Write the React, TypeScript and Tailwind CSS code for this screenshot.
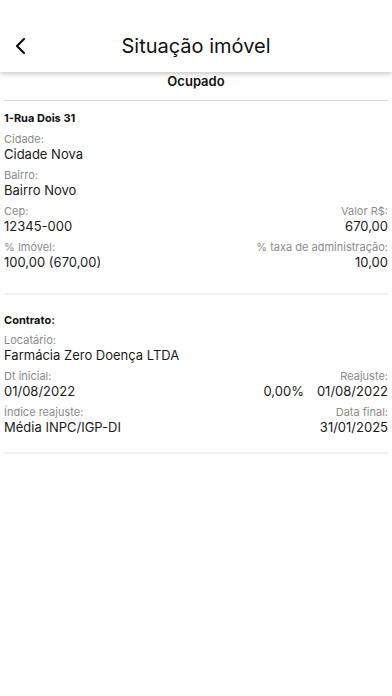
import React from "react";

const Label = ({ children, right }: { children: React.ReactNode; right?: boolean }) => (
  <div className={`text-[11px] leading-[14px] text-[#8a8a8a] ${right ? "text-right" : ""}`}>{children}</div>
);
const Value = ({ children, right }: { children: React.ReactNode; right?: boolean }) => (
  <div className={`text-[13px] leading-[16px] text-[#1a1a1a] ${right ? "text-right" : ""}`}>{children}</div>
);

export default function App() {
  return (
    <div
      className="w-[392px] h-[696px] bg-white overflow-hidden"
      style={{ fontFamily: "Inter, 'Noto Sans', sans-serif" }}
    >
      <div className="relative h-[72px] bg-white shadow-[0_2px_5px_rgba(0,0,0,0.22)] z-10 flex items-end justify-center pb-[14px]">
        <svg
          className="absolute left-[13px] top-[37px]"
          width="16"
          height="18"
          viewBox="0 0 16 18"
          fill="none"
        >
          <path d="M11 2 L4 9 L11 16" stroke="#111" strokeWidth="2.2" strokeLinecap="round" strokeLinejoin="round" />
        </svg>
        <div className="text-[20px] leading-[24px] text-[#111]">Situação imóvel</div>
      </div>

      <div className="px-[4px]">
        <div className="text-center text-[13px] leading-[16px] font-semibold text-[#111] pt-[1px] pb-[11px]">Ocupado</div>
        <div className="h-px bg-[#d6d6d6]" />

        <div className="pt-[10px]">
          <div className="text-[11px] leading-[14px] font-bold text-[#111]">1-Rua Dois 31</div>
          <div className="mt-[7px] flex flex-col gap-[6px]">
            <div>
              <Label>Cidade:</Label>
              <Value>Cidade Nova</Value>
            </div>
            <div>
              <Label>Bairro:</Label>
              <Value>Bairro Novo</Value>
            </div>
            <div className="flex justify-between">
              <div>
                <Label>Cep:</Label>
                <Value>12345-000</Value>
              </div>
              <div>
                <Label right>Valor R$:</Label>
                <Value right>670,00</Value>
              </div>
            </div>
            <div className="flex justify-between">
              <div>
                <Label>% Imóvel:</Label>
                <Value>100,00 (670,00)</Value>
              </div>
              <div>
                <Label right>% taxa de administração:</Label>
                <Value right>10,00</Value>
              </div>
            </div>
          </div>
        </div>
        <div className="mt-[23px] h-[2px] bg-[#f1f1f1]" />

        <div className="pt-[18px]">
          <div className="text-[11px] leading-[14px] font-bold text-[#111]">Contrato:</div>
          <div className="mt-[6px] flex flex-col gap-[6px]">
            <div>
              <Label>Locatário:</Label>
              <Value>Farmácia Zero Doença LTDA</Value>
            </div>
            <div className="flex justify-between">
              <div>
                <Label>Dt inicial:</Label>
                <Value>01/08/2022</Value>
              </div>
              <div>
                <Label right>Reajuste:</Label>
                <div className="flex justify-end gap-[13px]">
                  <Value>0,00%</Value>
                  <Value>01/08/2022</Value>
                </div>
              </div>
            </div>
            <div className="flex justify-between">
              <div>
                <Label>Índice reajuste:</Label>
                <Value>Média INPC/IGP-DI</Value>
              </div>
              <div>
                <Label right>Data final:</Label>
                <Value right>31/01/2025</Value>
              </div>
            </div>
          </div>
        </div>
        <div className="mt-[17px] h-[2px] bg-[#f1f1f1]" />
      </div>
    </div>
  );
}
